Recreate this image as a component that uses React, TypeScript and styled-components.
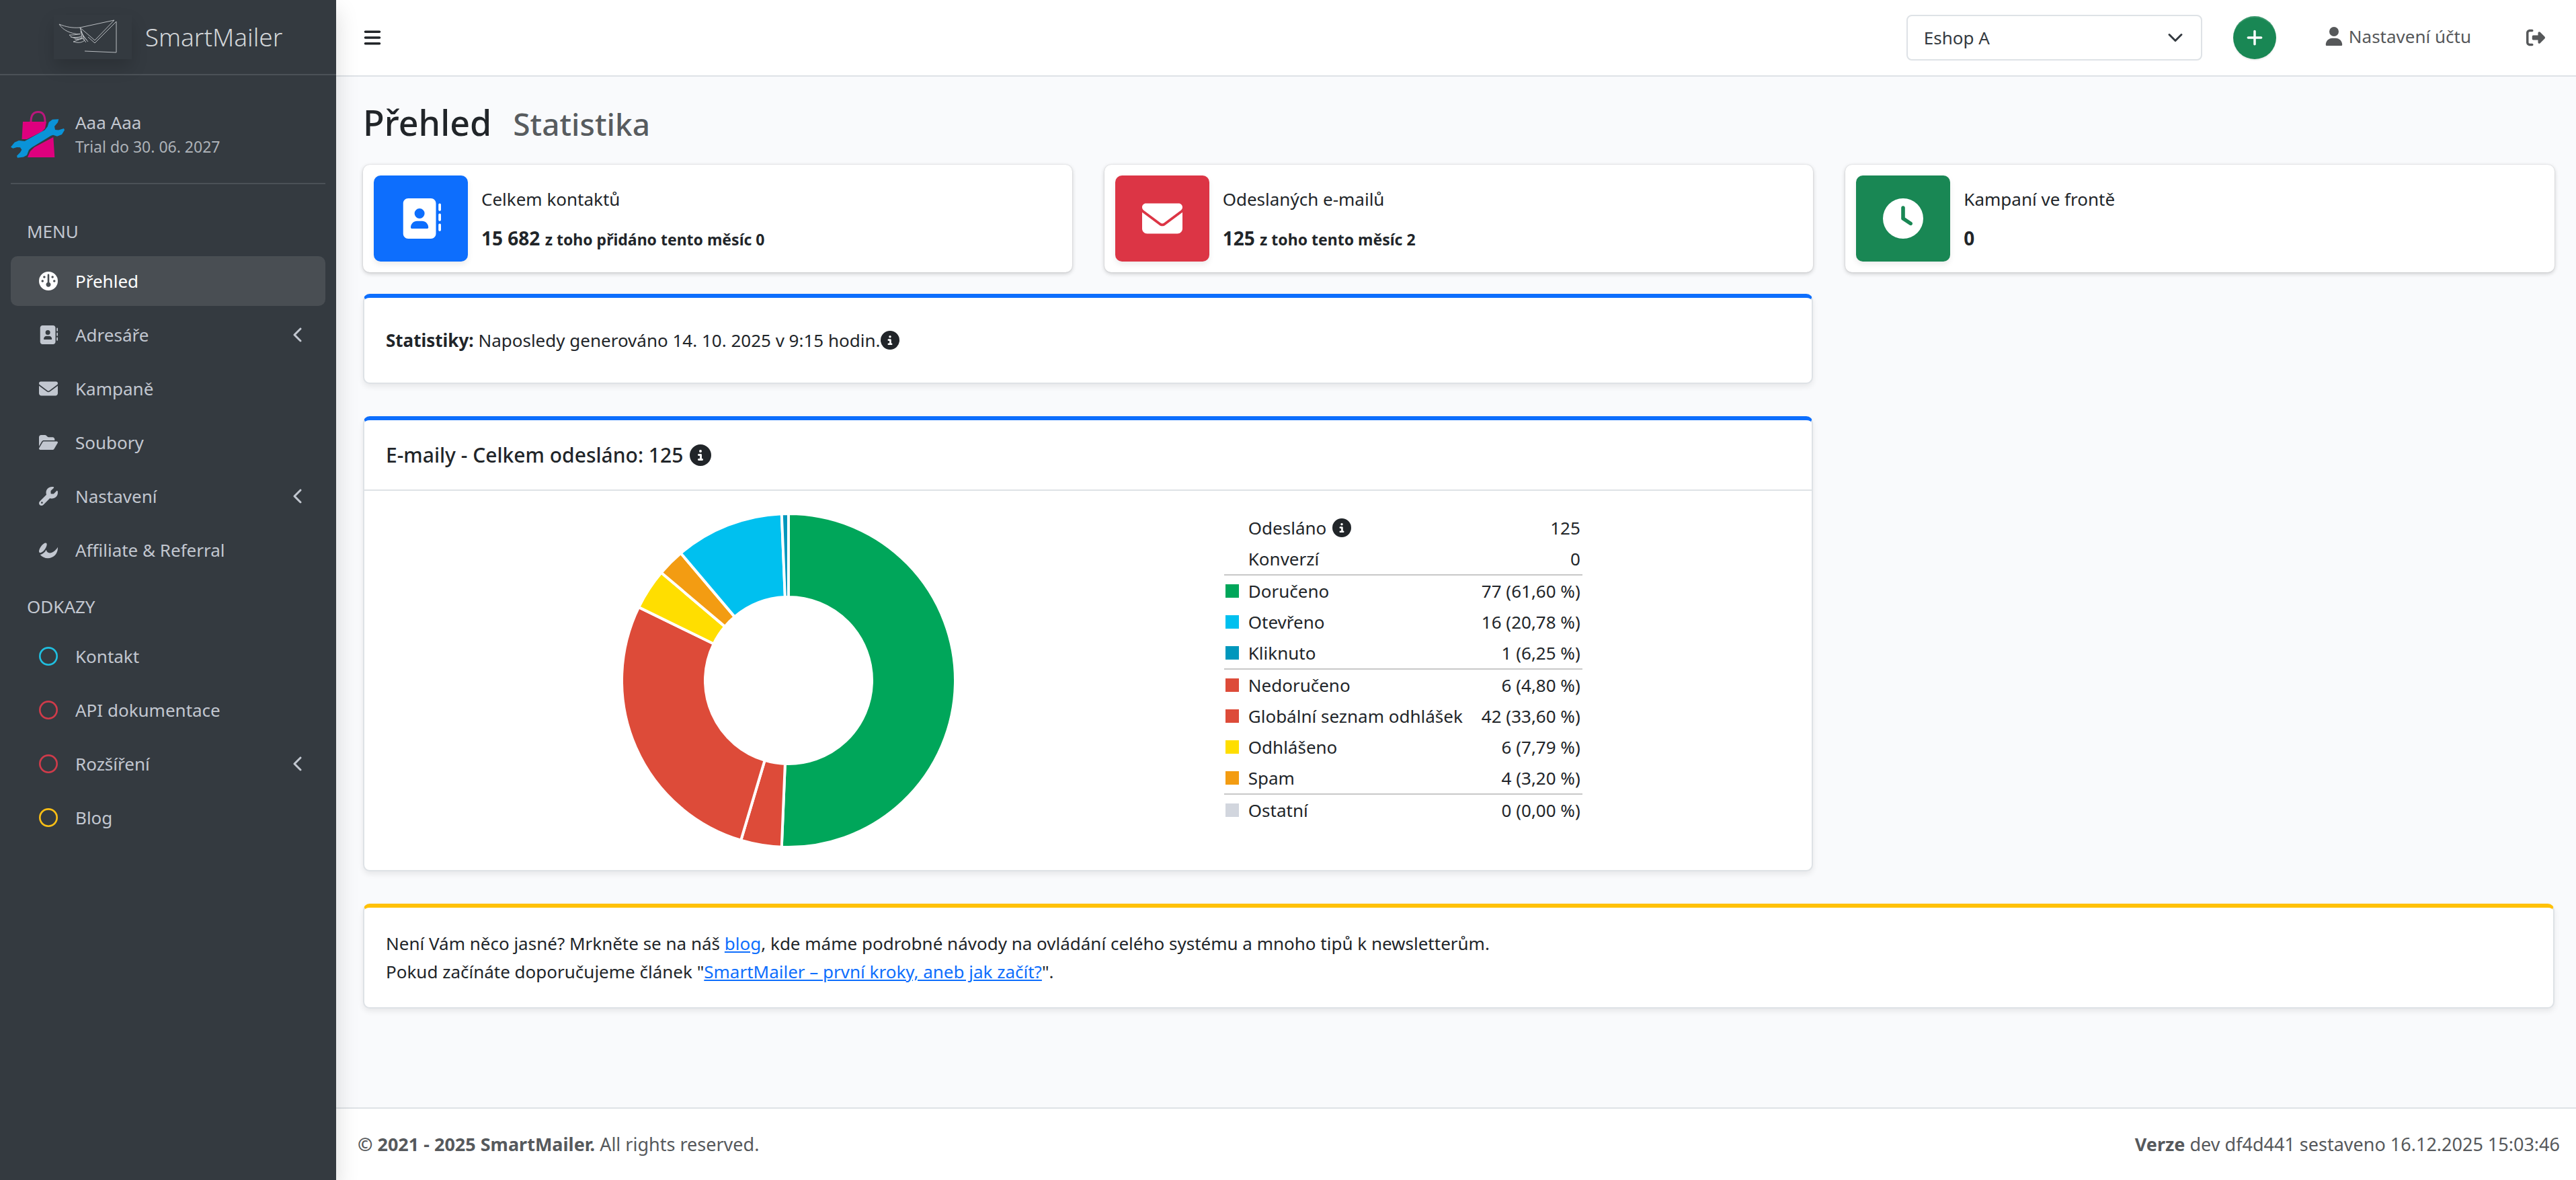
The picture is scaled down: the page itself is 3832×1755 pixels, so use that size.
import React from "react";
import styled, { createGlobalStyle } from "styled-components";
import {
  FaGauge, FaAddressBook, FaEnvelope, FaFolderOpen, FaWrench, FaAffiliatetheme, FaRegCircle,
  FaChevronLeft, FaCircleInfo, FaUser, FaRightFromBracket, FaBars, FaPlus, FaClock,
} from "react-icons/fa6";

const Global = createGlobalStyle`
  *, *::before, *::after { box-sizing: border-box; }
  body {
    margin: 0;
    font-family: "Noto Sans", "Open Sans", sans-serif;
    font-size: 26px;
    line-height: 42px;
    color: #212529;
    background: #f9fafc;
  }
  svg { display: block; }
`;

const Layout = styled.div`
  display: grid;
  grid-template-columns: 500px minmax(0, 1fr);
  min-height: 100vh;
`;

const Sidebar = styled.aside`
  position: relative;
  z-index: 1;
  background: #343a40;
  color: #c2c7d0;
  box-shadow: 0 16px 32px rgba(0, 0, 0, 0.15);
`;

const Brand = styled.a`
  display: flex;
  align-items: center;
  justify-content: center;
  gap: 20px;
  height: 112px;
  border-bottom: 2px solid #4b5157;
  color: #d3d6d9;
  font-size: 37px;
  font-weight: 300;
  text-decoration: none;
`;

const LogoBox = styled.span`
  width: 116px;
  height: 66px;
  box-shadow: 0 12px 24px rgba(0, 0, 0, 0.16);
`;

const UserPanel = styled.div`
  display: flex;
  align-items: center;
  gap: 16px;
  height: 162px;
  margin: 0 16px 33px;
  padding-top: 16px;
  border-bottom: 2px solid #4b5157;
`;

const UserText = styled.div`
  line-height: 36px;
`;

const Trial = styled.div`
  font-size: 23px;
  color: #adb2b8;
`;

const NavGroups = styled.nav`
  display: flex;
  flex-direction: column;
  gap: 4px;
`;

const NavList = styled.ul`
  list-style: none;
  margin: 0;
  padding: 0 16px;
`;

const NavHeader = styled.li`
  padding: 16px 24px;
`;

const NavItem = styled.li`
  margin-bottom: 6px;
`;

const NavLink = styled.a<{ $active?: boolean }>`
  display: grid;
  grid-template-columns: 32px 1fr auto;
  align-items: center;
  column-gap: 24px;
  height: 74px;
  padding: 0 28px 0 40px;
  border-radius: 10px;
  color: ${(p) => (p.$active ? "#ffffff" : "#c2c7d0")};
  background: ${(p) => (p.$active ? "#494e53" : "transparent")};
  text-decoration: none;
`;

const NavIcon = styled.span<{ $color?: string }>`
  display: flex;
  justify-content: center;
  font-size: 28px;
  color: ${(p) => p.$color ?? "inherit"};
`;

const Arrow = styled.span`
  font-size: 24px;
`;

const Main = styled.div`
  display: flex;
  flex-direction: column;
  min-width: 0;
`;

const TopBar = styled.header`
  display: flex;
  align-items: center;
  height: 114px;
  padding: 0 46px 0 40px;
  background: #ffffff;
  border-bottom: 2px solid #dee2e6;
`;

const IconButton = styled.button<{ $color: string }>`
  display: flex;
  padding: 0;
  border: 0;
  background: none;
  color: ${(p) => p.$color};
  font-size: 28px;
`;

const TopTools = styled.div`
  display: flex;
  align-items: center;
  margin-left: auto;
`;

const ShopSelect = styled.select`
  appearance: none;
  width: 440px;
  height: 68px;
  padding: 0 24px;
  border: 2px solid #dee2e6;
  border-radius: 8px;
  background: #ffffff;
  color: #343a40;
  font: inherit;
`;

const SelectWrap = styled.label`
  display: grid;
  align-items: center;
  & > * { grid-area: 1 / 1; }
  & > svg { justify-self: end; margin-right: 28px; pointer-events: none; }
`;

const AddButton = styled.button`
  display: flex;
  align-items: center;
  justify-content: center;
  width: 64px;
  height: 64px;
  margin: 0 72px 0 46px;
  border: 0;
  border-radius: 50%;
  background: #198754;
  color: #ffffff;
  font-size: 28px;
  box-shadow: inset 0 2px 0 rgba(255, 255, 255, 0.15), 0 2px 2px rgba(0, 0, 0, 0.08);
`;

const AccountLink = styled.a`
  display: flex;
  align-items: center;
  gap: 8px;
  margin-right: 82px;
  padding-bottom: 4px;
  color: #56585a;
  text-decoration: none;
  & > svg { font-size: 28px; }
`;

const Content = styled.main`
  flex: 1;
  padding: 30px 32px 48px 40px;
`;

const PageTitle = styled.h1`
  display: flex;
  align-items: baseline;
  gap: 32px;
  margin: 0 0 25px;
  font-size: 52px;
  font-weight: 500;
  line-height: 76px;
`;

const SubTitle = styled.small`
  font-size: 46px;
  font-weight: 500;
  line-height: 64px;
  color: #585c5f;
`;

const Grid = styled.div`
  display: grid;
  grid-template-columns: repeat(12, minmax(0, 1fr));
  column-gap: 48px;
`;

const Col = styled.div<{ $span: number }>`
  grid-column: span ${(p) => p.$span};
`;

const InfoBox = styled.div`
  display: flex;
  gap: 20px;
  height: 160px;
  margin-bottom: 32px;
  padding: 16px;
  border-radius: 10px;
  background: #ffffff;
  box-shadow: 0 0 2px rgba(0, 0, 0, 0.14), 0 2px 6px rgba(0, 0, 0, 0.2);
`;

const InfoIcon = styled.div<{ $color: string }>`
  display: flex;
  align-items: center;
  justify-content: center;
  width: 140px;
  border-radius: 10px;
  background: ${(p) => p.$color};
  color: #ffffff;
  font-size: 60px;
  box-shadow: 0 4px 8px rgba(0, 0, 0, 0.08);
`;

const InfoText = styled.div`
  display: flex;
  flex-direction: column;
  justify-content: center;
  gap: 16px;
`;

const InfoNumber = styled.strong`
  font-size: 28px;
  small { font-size: 23px; line-height: 23px; }
`;

const Card = styled.section<{ $accent: string }>`
  margin-bottom: 48px;
  border: 2px solid #dee2e6;
  border-top: 6px solid ${(p) => p.$accent};
  border-radius: 10px;
  background: #ffffff;
  box-shadow: 0 4px 8px rgba(0, 0, 0, 0.08);
`;

const CardHeader = styled.h2`
  display: flex;
  align-items: center;
  gap: 10px;
  height: 105px;
  margin: 0;
  padding: 0 32px;
  border-bottom: 2px solid #dee2e6;
  font-size: 30px;
  font-weight: 500;
  & > svg { font-size: 32px; }
`;

const CardBody = styled.div`
  padding: 32px;
  a { color: #0d6efd; }
`;

const StatusLine = styled.div`
  display: flex;
  align-items: center;
  padding: 42px 32px;
  white-space: pre;
  & > svg { font-size: 28px; }
`;

const ChartBox = styled.div`
  display: flex;
  justify-content: center;
`;

const LegendTable = styled.table`
  border-collapse: collapse;
`;

const LegendRow = styled.tr<{ $ruled?: boolean }>`
  border-top: ${(p) => (p.$ruled ? "2px solid #c8c8c8" : "0")};
`;

const SwatchCell = styled.td`
  padding: 0 14px 0 2px;
`;

const Swatch = styled.span<{ $color?: string }>`
  display: block;
  width: 20px;
  height: 20px;
  background: ${(p) => p.$color ?? "transparent"};
`;

const LabelCell = styled.th`
  padding: 2px 0;
  font-weight: 400;
  text-align: left;
`;

const LabelText = styled.span`
  display: flex;
  align-items: center;
  gap: 9px;
  & > svg { font-size: 28px; }
`;

const ValueCell = styled.td`
  padding: 2px 3px 2px 28px;
  text-align: right;
`;

const Footer = styled.footer`
  display: flex;
  justify-content: space-between;
  padding: 32px 24px 32px 32px;
  border-top: 2px solid #dee2e6;
  background: #ffffff;
  color: #56595c;
  font-size: 27px;
`;

type MenuEntry = { label: string; icon: React.ReactNode; color?: string; active?: boolean; nested?: boolean };

const menu: MenuEntry[] = [
  { label: "Přehled", icon: <FaGauge />, active: true },
  { label: "Adresáře", icon: <FaAddressBook />, nested: true },
  { label: "Kampaně", icon: <FaEnvelope /> },
  { label: "Soubory", icon: <FaFolderOpen /> },
  { label: "Nastavení", icon: <FaWrench />, nested: true },
  { label: "Affiliate & Referral", icon: <FaAffiliatetheme /> },
];

const links: MenuEntry[] = [
  { label: "Kontakt", icon: <FaRegCircle />, color: "#20bfe0" },
  { label: "API dokumentace", icon: <FaRegCircle />, color: "#cf3b4a" },
  { label: "Rozšíření", icon: <FaRegCircle />, color: "#cf3b4a", nested: true },
  { label: "Blog", icon: <FaRegCircle />, color: "#fbbf15" },
];

const legend = [
  { label: "Odesláno", value: "125", info: true },
  { label: "Konverzí", value: "0" },
  { label: "Doručeno", value: "77 (61,60 %)", color: "#00a65a", ruled: true },
  { label: "Otevřeno", value: "16 (20,78 %)", color: "#00c0ef" },
  { label: "Kliknuto", value: "1 (6,25 %)", color: "#0097bc" },
  { label: "Nedoručeno", value: "6 (4,80 %)", color: "#dd4b39", ruled: true },
  { label: "Globální seznam odhlášek", value: "42 (33,60 %)", color: "#dd4b39" },
  { label: "Odhlášeno", value: "6 (7,79 %)", color: "#ffde00" },
  { label: "Spam", value: "4 (3,20 %)", color: "#f39c12" },
  { label: "Ostatní", value: "0 (0,00 %)", color: "#d2d6de", ruled: true },
];

const slices = [
  { value: 77, color: "#00a65a" },
  { value: 6, color: "#dd4b39" },
  { value: 42, color: "#dd4b39" },
  { value: 6, color: "#ffde00" },
  { value: 4, color: "#f39c12" },
  { value: 16, color: "#00c0ef" },
  { value: 1, color: "#0097bc" },
];

function Donut() {
  const total = slices.reduce((sum, s) => sum + s.value, 0);
  const outer = 248;
  const inner = 124;
  const point = (r: number, t: number) =>
    `${250 + r * Math.sin(t * 2 * Math.PI)} ${250 - r * Math.cos(t * 2 * Math.PI)}`;
  let at = 0;
  return (
    <svg width="500" height="500" viewBox="0 0 500 500" role="img" aria-label="E-maily">
      {slices.map((s, i) => {
        const a = at / total;
        at += s.value;
        const b = at / total;
        const large = b - a > 0.5 ? 1 : 0;
        return (
          <path
            key={i}
            d={`M${point(outer, a)}A${outer} ${outer} 0 ${large} 1 ${point(outer, b)}L${point(inner, b)}A${inner} ${inner} 0 ${large} 0 ${point(inner, a)}Z`}
            fill={s.color}
            stroke="#ffffff"
            strokeWidth="4"
            strokeLinejoin="bevel"
          />
        );
      })}
    </svg>
  );
}

function Logo() {
  return (
    <svg width="116" height="66" viewBox="0 0 116 66" fill="none" stroke="#b9bdc1" strokeWidth="1">
      <path d="M39 19 90 8 61 38 39 19 46 39M51 33 61 42 93 10V56L46 54" />
      <path d="M39 19C28 20 18 18 8 14C14 23 24 28 39 29M39 28C34 30 28 30 23 30C27 35 34 36 42 34M25 33C30 34 36 34 41 32M42 35C37 37 33 39 29 40C36 42 41 42 46 38M31 36C35 37 39 37 43 35M39 19 44 32 51 40M40 24 42 34 48 41M42 28 49 38" />
    </svg>
  );
}

function Avatar() {
  return (
    <svg width="80" height="70" viewBox="0 0 80 70">
      <path d="M30 16C30 6 34 1.500 41 1.500S51 6 51 16" fill="none" stroke="#b8177c" strokeWidth="3" />
      <path d="M18 16H53L51 26L46 31L24 42H16.500ZM63.300 39 65.300 69H25L29 60 35 54Z" fill="#de007e" />
      <path
        d="M71.300 12.300 70 17 65 23 66 28 71 28.500 79 26 80 28.500 76 35 69 37.700 63 35.700 60 36.700 31 54.500 27 58 24 65.700 19 68.500 10 69.700 9 66.700 14 61.700 16.300 57.700 14 54.300 9 54 3.300 55.700 0 53.700 5.700 46.700 12 44 20.700 45 50.700 28.300 54.700 23.300 56.700 16.700 62 12.700Z"
        fill="#0a93d8"
      />
    </svg>
  );
}

function NavEntries({ items }: { items: MenuEntry[] }) {
  return (
    <>
      {items.map((item) => (
        <NavItem key={item.label}>
          <NavLink href="#" $active={item.active}>
            <NavIcon $color={item.color}>{item.icon}</NavIcon>
            <span>{item.label}</span>
            {item.nested && <Arrow><FaChevronLeft /></Arrow>}
          </NavLink>
        </NavItem>
      ))}
    </>
  );
}

export default function App() {
  return (
    <>
      <Global />
      <Layout>
        <Sidebar>
          <Brand href="#">
            <LogoBox><Logo /></LogoBox>
            <span>SmartMailer</span>
          </Brand>
          <UserPanel>
            <Avatar />
            <UserText>
              <div>Aaa Aaa</div>
              <Trial>Trial do 30. 06. 2027</Trial>
            </UserText>
          </UserPanel>
          <NavGroups>
            <NavList>
              <NavHeader>MENU</NavHeader>
              <NavEntries items={menu} />
            </NavList>
            <NavList>
              <NavHeader>ODKAZY</NavHeader>
              <NavEntries items={links} />
            </NavList>
          </NavGroups>
        </Sidebar>
        <Main>
          <TopBar>
            <IconButton $color="#212529" aria-label="Menu"><FaBars /></IconButton>
            <TopTools>
              <SelectWrap>
                <ShopSelect aria-label="Eshop" defaultValue="a">
                  <option value="a">Eshop A</option>
                </ShopSelect>
                <svg width="24" height="24" viewBox="0 0 16 16" fill="none" stroke="#343a40" strokeWidth="2" strokeLinecap="round" strokeLinejoin="round">
                  <path d="m2 5 6 6 6-6" />
                </svg>
              </SelectWrap>
              <AddButton aria-label="Přidat"><FaPlus /></AddButton>
              <AccountLink href="#"><FaUser /><span>Nastavení účtu</span></AccountLink>
              <IconButton $color="#56585a" aria-label="Odhlásit"><FaRightFromBracket /></IconButton>
            </TopTools>
          </TopBar>
          <Content>
            <PageTitle>
              Přehled <SubTitle>Statistika</SubTitle>
            </PageTitle>
            <Grid>
              <Col $span={4}>
                <InfoBox>
                  <InfoIcon $color="#0d6efd"><FaAddressBook /></InfoIcon>
                  <InfoText>
                    <span>Celkem kontaktů</span>
                    <InfoNumber>15 682 <small>z toho přidáno tento měsíc 0</small></InfoNumber>
                  </InfoText>
                </InfoBox>
              </Col>
              <Col $span={4}>
                <InfoBox>
                  <InfoIcon $color="#dc3545"><FaEnvelope /></InfoIcon>
                  <InfoText>
                    <span>Odeslaných e-mailů</span>
                    <InfoNumber>125 <small>z toho tento měsíc 2</small></InfoNumber>
                  </InfoText>
                </InfoBox>
              </Col>
              <Col $span={4}>
                <InfoBox>
                  <InfoIcon $color="#198754"><FaClock /></InfoIcon>
                  <InfoText>
                    <span>Kampaní ve frontě</span>
                    <InfoNumber>0</InfoNumber>
                  </InfoText>
                </InfoBox>
              </Col>
              <Col $span={8}>
                <Card $accent="#0d6efd">
                  <StatusLine>
                    <strong>Statistiky: </strong>
                    <span>Naposledy generováno 14. 10. 2025 v 9:15 hodin.</span>
                    <FaCircleInfo />
                  </StatusLine>
                </Card>
                <Card $accent="#0d6efd">
                  <CardHeader>E-maily - Celkem odesláno: 125 <FaCircleInfo /></CardHeader>
                  <CardBody>
                    <Grid>
                      <Col $span={7}>
                        <ChartBox><Donut /></ChartBox>
                      </Col>
                      <Col $span={5}>
                        <LegendTable>
                          <tbody>
                            {legend.map((row) => (
                              <LegendRow key={row.label} $ruled={row.ruled}>
                                <SwatchCell><Swatch $color={row.color} /></SwatchCell>
                                <LabelCell scope="row">
                                  <LabelText>{row.label}{row.info && <FaCircleInfo />}</LabelText>
                                </LabelCell>
                                <ValueCell>{row.value}</ValueCell>
                              </LegendRow>
                            ))}
                          </tbody>
                        </LegendTable>
                      </Col>
                    </Grid>
                  </CardBody>
                </Card>
              </Col>
              <Col $span={12}>
                <Card $accent="#ffc107">
                  <CardBody>
                    Není Vám něco jasné? Mrkněte se na náš <a href="#">blog</a>, kde máme podrobné návody na ovládání celého systému a mnoho tipů k newsletterům.
                    <br />
                    Pokud začínáte doporučujeme článek "<a href="#">SmartMailer – první kroky, aneb jak začít?</a>".
                  </CardBody>
                </Card>
              </Col>
            </Grid>
          </Content>
          <Footer>
            <span><strong>© 2021 - 2025 SmartMailer.</strong> All rights reserved.</span>
            <span><strong>Verze</strong> dev df4d441 sestaveno 16.12.2025 15:03:46</span>
          </Footer>
        </Main>
      </Layout>
    </>
  );
}
